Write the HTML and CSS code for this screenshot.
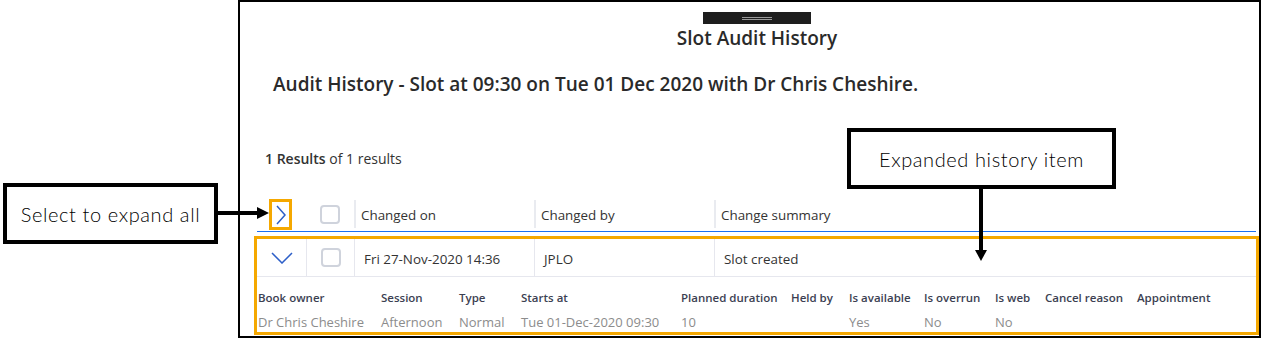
FILE: index.html
```html
<!DOCTYPE html>
<html lang="en">
<head>
    <meta charset="UTF-8">
    <meta name="viewport" content="width=device-width, initial-scale=1.0">
    <title>Slot Audit History</title>
    <link rel="stylesheet" href="styles.css">
</head>
<body>
    <div class="page">
        <div class="frame">
            <div class="dialog-head">
                <div class="grip"><span></span></div>
                <h1>Slot Audit History</h1>
            </div>
            <h2>Audit History - Slot at 09:30 on Tue 01 Dec 2020 with Dr Chris Cheshire.</h2>
            <p class="count"><strong>1 Results</strong> of 1 results</p>

            <div class="grid-head">
                <div class="cell cell-expand">
                    <span class="expand-all">
                        <svg width="12" height="20" viewBox="0 0 12 20"><polyline points="2,1 10,10 2,19" fill="none" stroke="#2d5fc8" stroke-width="1.5"/></svg>
                    </span>
                </div>
                <div class="cell cell-check"><span class="checkbox"></span></div>
                <div class="cell col"><span class="sep"></span>Changed on</div>
                <div class="cell col"><span class="sep"></span>Changed by</div>
                <div class="cell col"><span class="sep"></span>Change summary</div>
            </div>

            <div class="history-item">
                <div class="grid-row">
                    <div class="cell cell-expand">
                        <svg width="22" height="12" viewBox="0 0 22 12"><polyline points="1,1 11,11 21,1" fill="none" stroke="#2d5fc8" stroke-width="1.5"/></svg>
                    </div>
                    <div class="cell cell-check"><span class="checkbox"></span></div>
                    <div class="cell col">Fri 27-Nov-2020 14:36</div>
                    <div class="cell col">JPLO</div>
                    <div class="cell col">Slot created</div>
                </div>
                <div class="details">
                    <div class="label">Book owner</div>
                    <div class="label">Session</div>
                    <div class="label">Type</div>
                    <div class="label">Starts at</div>
                    <div class="label">Planned duration</div>
                    <div class="label">Held by</div>
                    <div class="label">Is available</div>
                    <div class="label">Is overrun</div>
                    <div class="label">Is web</div>
                    <div class="label">Cancel reason</div>
                    <div class="label">Appointment</div>
                    <div class="value">Dr Chris Cheshire</div>
                    <div class="value">Afternoon</div>
                    <div class="value">Normal</div>
                    <div class="value">Tue 01-Dec-2020 09:30</div>
                    <div class="value">10</div>
                    <div class="value"></div>
                    <div class="value">Yes</div>
                    <div class="value">No</div>
                    <div class="value">No</div>
                    <div class="value"></div>
                    <div class="value"></div>
                </div>
            </div>
        </div>

        <!-- annotations drawn over the screenshot -->
        <div class="callout callout-left">Select to expand all</div>
        <div class="callout callout-right">Expanded history item</div>
        <svg class="arrows" width="1262" height="339" viewBox="0 0 1262 339">
            <rect x="218" y="211" width="41" height="4" fill="#000"/>
            <polygon points="257,207 269,213 257,219" fill="#000"/>
            <rect x="979" y="189" width="4" height="62" fill="#000"/>
            <polygon points="975,250 987,250 981,261" fill="#000"/>
        </svg>
    </div>
</body>
</html>
```

FILE: styles.css
```css
body {
    margin: 0;
    background: #fff;
    font-family: "Open Sans", "Noto Sans", sans-serif;
    color: #333;
}
.page {
    position: relative;
    width: 1262px;
    height: 339px;
    overflow: hidden;
}
.frame {
    box-sizing: border-box;
    margin-left: 238px;
    width: 1023px;
    height: 338px;
    border: 2px solid #000;
}
.dialog-head {
    padding-left: 15px;
    text-align: center;
}
.grip {
    width: 108px;
    height: 12px;
    margin: 10px auto 0;
    background: #1e1e1e;
    display: flex;
    justify-content: center;
    align-items: center;
}
.grip span {
    width: 30px;
    height: 1px;
    border-top: 1px solid #9a9a9a;
    border-bottom: 1px solid #9a9a9a;
}
h1 {
    margin: 2px 0 0;
    font-size: 19px;
    line-height: 24px;
    font-weight: 600;
    color: #2a2a2a;
}
h2 {
    margin: 21px 0 0 33px;
    font-size: 19px;
    line-height: 26px;
    font-weight: 600;
    color: #2a2a2a;
}
.count {
    margin: 52px 0 0 25px;
    font-size: 14px;
    line-height: 20px;
}
.count strong {
    font-weight: 600;
}
.grid-head,
.grid-row {
    display: grid;
    grid-template-columns: 49px 48px 180px 180px 1fr;
    font-size: 13.4px;
}
.grid-head {
    margin: 29px 3px 0 17px;
    height: 34px;
    box-sizing: border-box;
    border-bottom: 1px solid #1a6ff2;
}
.cell {
    display: flex;
    align-items: center;
    position: relative;
}
.cell-expand,
.cell-check {
    justify-content: center;
}
.grid-head .col {
    padding-left: 7px;
}
.sep {
    position: absolute;
    left: 0;
    top: 2px;
    bottom: 3px;
    border-left: 2px solid #e9ebf0;
}
.expand-all {
    box-sizing: border-box;
    width: 23px;
    height: 31px;
    border: 3px solid #f5a800;
    display: flex;
    align-items: center;
    justify-content: center;
    margin-left: -2px;
}
.checkbox {
    box-sizing: border-box;
    width: 20px;
    height: 19px;
    border: 2px solid #cfd3dc;
    border-radius: 4px;
}
.history-item {
    margin: 4px 0 0 14px;
    height: 99px;
    border: 3px solid #f5a800;
    box-sizing: border-box;
}
.grid-row {
    height: 38px;
    box-sizing: border-box;
    border-bottom: 1px solid #e6e7ee;
}
.grid-row .cell + .cell {
    border-left: 1px solid #e6e7ee;
}
.grid-row .col {
    padding: 3px 0 0 9px;
}
.details {
    display: grid;
    grid-template-columns: 123px 78px 62px 160px 110px 58px 75px 71px 50px 92px auto;
    padding: 13px 0 0 1px;
    row-gap: 7px;
}
.label {
    font-size: 11.5px;
    line-height: 16px;
    font-weight: 600;
    color: #3c3f52;
}
.value {
    font-size: 13px;
    line-height: 18px;
    color: #8c8c8c;
}
.callout {
    position: absolute;
    box-sizing: border-box;
    border: 4px solid #000;
    background: #fff;
    display: flex;
    align-items: center;
    justify-content: center;
    font-family: Lato, "DejaVu Sans", sans-serif;
    font-weight: 300;
    font-size: 20px;
    letter-spacing: 0.6px;
    color: #000;
}
.callout-left {
    left: 3px;
    top: 183px;
    width: 215px;
    height: 61px;
}
.callout-right {
    left: 847px;
    top: 128px;
    width: 269px;
    height: 61px;
}
.arrows {
    position: absolute;
    left: 0;
    top: 0;
    pointer-events: none;
}
```
